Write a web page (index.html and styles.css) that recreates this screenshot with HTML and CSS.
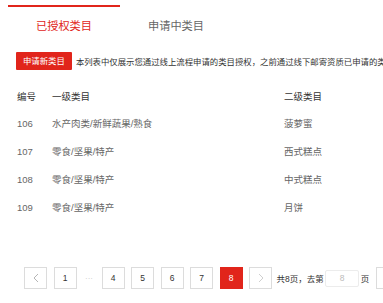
FILE: index.html
```html
<!DOCTYPE html>
<html lang="zh-CN">
<head>
<meta charset="utf-8">
<title>类目</title>
<link rel="stylesheet" href="styles.css">
</head>
<body>
<div class="page">
  <div class="tabs">
    <div class="tab active">已授权类目</div>
    <div class="tab">申请中类目</div>
  </div>
  <div class="notice">
    <button class="btn-apply">申请新类目</button>
    <span class="notice-text">本列表中仅展示您通过线上流程申请的类目授权，之前通过线下邮寄资质已申请的类目请到线下查询</span>
  </div>
  <div class="table">
    <div class="row head">
      <div class="c1">编号</div><div class="c2">一级类目</div><div class="c3">二级类目</div>
    </div>
    <div class="row">
      <div class="c1">106</div><div class="c2">水产肉类/新鲜蔬果/熟食</div><div class="c3">菠萝蜜</div>
    </div>
    <div class="row">
      <div class="c1">107</div><div class="c2">零食/坚果/特产</div><div class="c3">西式糕点</div>
    </div>
    <div class="row">
      <div class="c1">108</div><div class="c2">零食/坚果/特产</div><div class="c3">中式糕点</div>
    </div>
    <div class="row">
      <div class="c1">109</div><div class="c2">零食/坚果/特产</div><div class="c3">月饼</div>
    </div>
  </div>
  <div class="pager">
    <span class="pg arrow"><svg width="6" height="10" viewBox="0 0 6 10"><polyline points="5,1 1,5 5,9" fill="none" stroke="#b5b5b5" stroke-width="1"/></svg></span>
    <span class="pg">1</span>
    <span class="dots">···</span>
    <span class="pg">4</span>
    <span class="pg">5</span>
    <span class="pg">6</span>
    <span class="pg">7</span>
    <span class="pg current">8</span>
    <span class="pg arrow"><svg width="6" height="10" viewBox="0 0 6 10"><polyline points="1,1 5,5 1,9" fill="none" stroke="#cfcfcf" stroke-width="1"/></svg></span>
    <span class="total">共8页，去第</span>
    <span class="jump"><input class="jump-input" type="text" placeholder="8"></span>
    <span class="unit">页</span>
    <button class="go">确定</button>
  </div>
</div>
</body>
</html>
```
FILE: styles.css
```css
html, body {
  margin: 0;
  padding: 0;
  background: #fff;
}
body {
  width: 383px;
  height: 303px;
  overflow: hidden;
  font-family: "Liberation Sans", "Noto Sans CJK SC", sans-serif;
  color: #333;
}
.page {
  width: 383px;
}
.tabs {
  display: flex;
  padding-left: 8px;
  padding-top: 5px;
}
.tab {
  width: 112px;
  text-align: center;
  font-size: 11.2px;
  line-height: 21px;
  padding: 9px 0 7px;
  border-top: 2px solid transparent;
  color: #666;
}
.tab.active {
  border-top-color: #e1251b;
  color: #e1251b;
}
.notice {
  display: flex;
  align-items: center;
  margin-top: 8px;
  padding-left: 16px;
  white-space: nowrap;
  overflow: hidden;
}
.btn-apply {
  flex-shrink: 0;
  height: 18px;
  padding: 0 7px;
  border: 0;
  border-radius: 1px;
  background: #e1251b;
  color: #fff;
  font-family: inherit;
  font-size: 8.4px;
  line-height: 18px;
}
.notice-text {
  margin-left: 4px;
  font-size: 8.4px;
  color: #333;
}
.table {
  margin-top: 12px;
}
.row {
  display: grid;
  grid-template-columns: 35px 232px 1fr;
  padding-left: 17px;
  height: 28px;
  align-items: center;
  font-size: 9.5px;
  color: #666;
}
.row.head {
  height: 27px;
  color: #333;
}
.pager {
  display: flex;
  align-items: center;
  margin-top: 46px;
  padding-left: 24px;
  gap: 6.5px;
  white-space: nowrap;
  font-size: 8.5px;
}
.pg {
  flex-shrink: 0;
  box-sizing: border-box;
  width: 23px;
  height: 22px;
  border: 1px solid #dcdcdc;
  display: flex;
  align-items: center;
  justify-content: center;
  color: #333;
}
.pg.current {
  background: #e1251b;
  border-color: #e1251b;
  color: #fff;
}
.dots {
  flex-shrink: 0;
  width: 12px;
  text-align: center;
  color: #c8c8c8;
  font-size: 8px;
}
.total {
  flex-shrink: 0;
  margin-left: -2px;
  color: #333;
}
.jump {
  flex-shrink: 0;
  margin-left: -5px;
}
.jump-input {
  box-sizing: border-box;
  width: 34px;
  height: 17px;
  border: 1px solid #ececec;
  border-radius: 2px;
  padding: 0;
  text-align: center;
  font-family: inherit;
  font-size: 8.5px;
  outline: none;
}
.jump-input::placeholder {
  color: #bbb;
}
.unit {
  flex-shrink: 0;
  margin-left: -5px;
  color: #333;
}
.go {
  flex-shrink: 0;
  box-sizing: border-box;
  height: 22px;
  padding: 0 8px;
  border: 1px solid #dcdcdc;
  background: #fff;
  font-family: inherit;
  font-size: 8.5px;
  color: #333;
}
```
